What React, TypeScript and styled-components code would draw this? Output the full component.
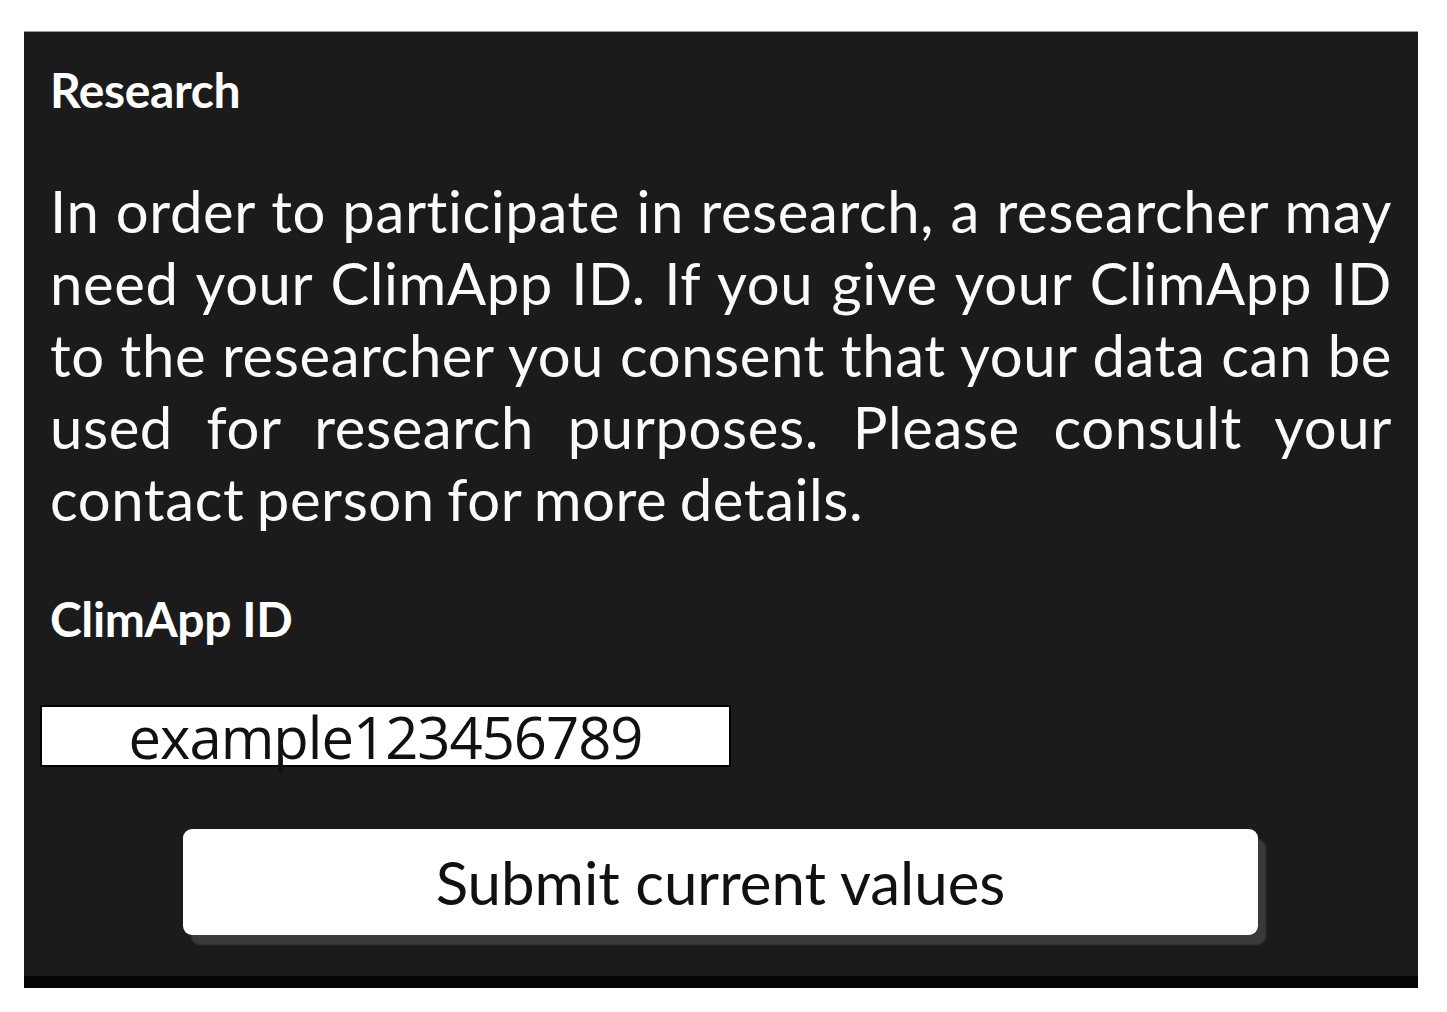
import React from 'react';
import styled, { createGlobalStyle } from 'styled-components';

const GlobalStyle = createGlobalStyle`
    html, body {
        margin: 0;
        padding: 0;
        background-color: #FFFFFF;
    }
    body {
        font-family: Lato, "Open Sans", sans-serif;
    }
`;

const Page = styled.div`
    padding: 31px 0 0 24px;
    width: 1447px;
    height: 1012px;
    box-sizing: border-box;
`;

const Panel = styled.div`
    width: 1394px;
    height: 957px;
    box-sizing: border-box;
    background-color: #1b1b1b;
    border-top: 1px solid #9a9a9a;
    border-bottom: 12px solid #050505;
    padding: 30px 26px 0 26px;
    display: flex;
    flex-direction: column;
    color: #FFFFFF;
`;

const Title = styled.div<{ $gap?: number }>`
    font-size: 48px;
    line-height: 56px;
    font-weight: 700;
    letter-spacing: -0.4px;
    margin-top: ${(p) => p.$gap ?? 0}px;
`;

const Body = styled.p`
    margin: 57px 0 0 0;
    font-size: 58px;
    line-height: 72px;
    letter-spacing: 0.6px;
    word-spacing: -3px;
    text-align: justify;
    font-variant-ligatures: none;
    color: #FAFAFA;
`;

const IdField = styled.div`
    margin: 58px 0 0 -10px;
    width: 691px;
    height: 62px;
    box-sizing: border-box;
    background-color: #FFFFFF;
    border: 2px solid #000000;
    color: #111111;
    font-family: "Open Sans", sans-serif;
    font-size: 58px;
    line-height: 60px;
    letter-spacing: -1px;
    text-align: center;
    white-space: nowrap;
`;

const SubmitButton = styled.button`
    align-self: center;
    margin: 62px 0 0 -1px;
    width: 1075px;
    height: 106px;
    border: none;
    border-radius: 9px;
    background-color: #FFFFFF;
    box-shadow: 8px 10px 2px #3a3a3a;
    color: #111111;
    font-family: Lato, sans-serif;
    font-size: 60px;
    padding: 0;
    cursor: pointer;
`;

const App: React.FC = () => {
    return (
        <>
            <GlobalStyle />
            <Page>
                <Panel>
                    <Title>Research</Title>
                    <Body>
                        In order to participate in research, a researcher may need your ClimApp ID. If you give your
                        ClimApp ID to the researcher you consent that your data can be used for research purposes.
                        Please consult your contact person for more details.
                    </Body>
                    <Title $gap={56}>ClimApp ID</Title>
                    <IdField>example123456789</IdField>
                    <SubmitButton>Submit current values</SubmitButton>
                </Panel>
            </Page>
        </>
    );
};

export default App;
